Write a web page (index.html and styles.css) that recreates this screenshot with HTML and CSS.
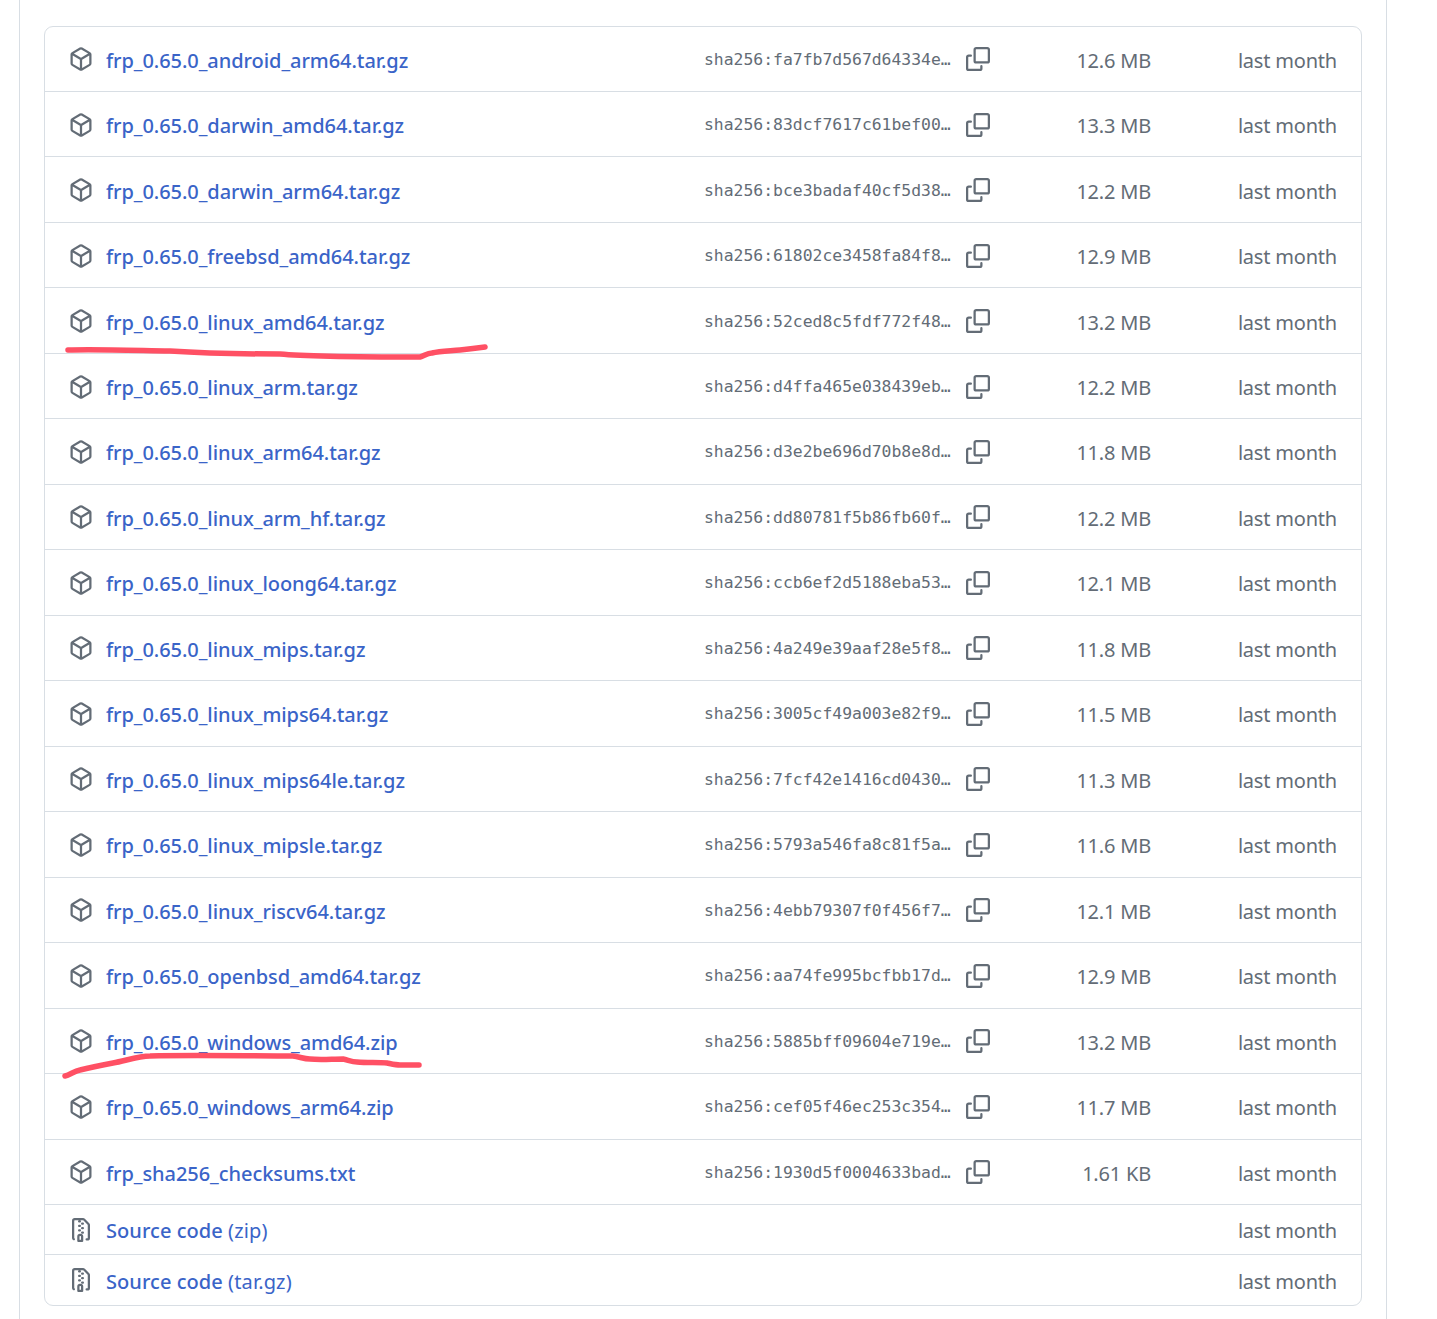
FILE: index.html
```html
<!DOCTYPE html>
<html lang="en">
<head>
  <meta charset="UTF-8" />
  <meta name="viewport" content="width=device-width, initial-scale=1.0"/>
  <title>frp assets</title>
  <link rel="stylesheet" href="styles.css">
</head>
<body>

  <svg class="defs" width="0" height="0">
    <symbol id="pkg" viewBox="0 0 16 16"><path d="m8.878.392 5.25 3.045c.54.314.872.89.872 1.514v6.098a1.75 1.75 0 0 1-.872 1.514l-5.25 3.045a1.75 1.75 0 0 1-1.756 0l-5.25-3.045A1.75 1.75 0 0 1 1 11.049V4.951c0-.624.332-1.201.872-1.514L7.122.392a1.75 1.75 0 0 1 1.756 0ZM7.875 1.69l-4.63 2.685L8 7.133l4.755-2.758-4.63-2.685a.248.248 0 0 0-.25 0ZM2.5 5.677v5.372c0 .09.047.171.125.216l4.625 2.683V8.432Zm6.25 8.271 4.625-2.683a.25.25 0 0 0 .125-.216V5.677L8.75 8.432Z"/></symbol>
    <symbol id="copy" viewBox="0 0 16 16"><path d="M0 6.75C0 5.784.784 5 1.75 5h1.5a.75.75 0 0 1 0 1.5h-1.5a.25.25 0 0 0-.25.25v7.5c0 .138.112.25.25.25h7.5a.25.25 0 0 0 .25-.25v-1.5a.75.75 0 0 1 1.5 0v1.5A1.75 1.75 0 0 1 9.25 16h-7.5A1.75 1.75 0 0 1 0 14.25Z"/><path d="M5 1.75C5 .784 5.784 0 6.75 0h7.5C15.216 0 16 .784 16 1.75v7.5A1.75 1.75 0 0 1 14.25 11h-7.5A1.75 1.75 0 0 1 5 9.25Zm1.75-.25a.25.25 0 0 0-.25.25v7.5c0 .138.112.25.25.25h7.5a.25.25 0 0 0 .25-.25v-7.5a.25.25 0 0 0-.25-.25Z"/></symbol>
    <symbol id="zip" viewBox="0 0 16 16"><path d="M3.5 1.75v11.5c0 .09.048.173.126.217a.75.75 0 0 1-.752 1.298A1.748 1.748 0 0 1 2 13.25V1.75C2 .784 2.784 0 3.75 0h5.586c.464 0 .909.185 1.237.513l2.914 2.914c.329.328.513.773.513 1.237v8.586A1.75 1.75 0 0 1 12.25 15h-.5a.75.75 0 0 1 0-1.5h.5a.25.25 0 0 0 .25-.25V4.664a.25.25 0 0 0-.073-.177L9.513 1.573a.25.25 0 0 0-.177-.073H7.25a.75.75 0 0 1 0 1.5h-.5a.75.75 0 0 1 0-1.5h-3a.25.25 0 0 0-.25.25Zm3.75 8.75h.5c.966 0 1.75.784 1.75 1.75v3a.75.75 0 0 1-.75.75h-2.5a.75.75 0 0 1-.75-.75v-3c0-.966.784-1.75 1.75-1.75ZM6 5.25a.75.75 0 0 1 .75-.75h.5a.75.75 0 0 1 0 1.5h-.5A.75.75 0 0 1 6 5.25Zm.75 2.25h.5a.75.75 0 0 1 0 1.5h-.5a.75.75 0 0 1 0-1.5ZM8 6.75A.75.75 0 0 1 8.75 6h.5a.75.75 0 0 1 0 1.5h-.5A.75.75 0 0 1 8 6.75ZM8.75 3h.5a.75.75 0 0 1 0 1.5h-.5a.75.75 0 0 1 0-1.5ZM8 9.75A.75.75 0 0 1 8.75 9h.5a.75.75 0 0 1 0 1.5h-.5A.75.75 0 0 1 8 9.75Zm-1 2.5v2.25h1v-2.25a.25.25 0 0 0-.25-.25h-.5a.25.25 0 0 0-.25.25Z"/></symbol>
  </svg>

  <div class="page">
    <ul class="assets">
      <li class="asset"><svg class="icon"><use href="#pkg"/></svg><a class="name">frp_0.65.0_android_arm64.tar.gz</a><code class="hash">sha256:fa7fb7d567d64334e…</code><svg class="icon"><use href="#copy"/></svg><span class="size">12.6 MB</span><span class="date">last month</span></li>
      <li class="asset"><svg class="icon"><use href="#pkg"/></svg><a class="name">frp_0.65.0_darwin_amd64.tar.gz</a><code class="hash">sha256:83dcf7617c61bef00…</code><svg class="icon"><use href="#copy"/></svg><span class="size">13.3 MB</span><span class="date">last month</span></li>
      <li class="asset"><svg class="icon"><use href="#pkg"/></svg><a class="name">frp_0.65.0_darwin_arm64.tar.gz</a><code class="hash">sha256:bce3badaf40cf5d38…</code><svg class="icon"><use href="#copy"/></svg><span class="size">12.2 MB</span><span class="date">last month</span></li>
      <li class="asset"><svg class="icon"><use href="#pkg"/></svg><a class="name">frp_0.65.0_freebsd_amd64.tar.gz</a><code class="hash">sha256:61802ce3458fa84f8…</code><svg class="icon"><use href="#copy"/></svg><span class="size">12.9 MB</span><span class="date">last month</span></li>
      <li class="asset"><svg class="icon"><use href="#pkg"/></svg><a class="name">frp_0.65.0_linux_amd64.tar.gz</a><code class="hash">sha256:52ced8c5fdf772f48…</code><svg class="icon"><use href="#copy"/></svg><span class="size">13.2 MB</span><span class="date">last month</span></li>
      <li class="asset"><svg class="icon"><use href="#pkg"/></svg><a class="name">frp_0.65.0_linux_arm.tar.gz</a><code class="hash">sha256:d4ffa465e038439eb…</code><svg class="icon"><use href="#copy"/></svg><span class="size">12.2 MB</span><span class="date">last month</span></li>
      <li class="asset"><svg class="icon"><use href="#pkg"/></svg><a class="name">frp_0.65.0_linux_arm64.tar.gz</a><code class="hash">sha256:d3e2be696d70b8e8d…</code><svg class="icon"><use href="#copy"/></svg><span class="size">11.8 MB</span><span class="date">last month</span></li>
      <li class="asset"><svg class="icon"><use href="#pkg"/></svg><a class="name">frp_0.65.0_linux_arm_hf.tar.gz</a><code class="hash">sha256:dd80781f5b86fb60f…</code><svg class="icon"><use href="#copy"/></svg><span class="size">12.2 MB</span><span class="date">last month</span></li>
      <li class="asset"><svg class="icon"><use href="#pkg"/></svg><a class="name">frp_0.65.0_linux_loong64.tar.gz</a><code class="hash">sha256:ccb6ef2d5188eba53…</code><svg class="icon"><use href="#copy"/></svg><span class="size">12.1 MB</span><span class="date">last month</span></li>
      <li class="asset"><svg class="icon"><use href="#pkg"/></svg><a class="name">frp_0.65.0_linux_mips.tar.gz</a><code class="hash">sha256:4a249e39aaf28e5f8…</code><svg class="icon"><use href="#copy"/></svg><span class="size">11.8 MB</span><span class="date">last month</span></li>
      <li class="asset"><svg class="icon"><use href="#pkg"/></svg><a class="name">frp_0.65.0_linux_mips64.tar.gz</a><code class="hash">sha256:3005cf49a003e82f9…</code><svg class="icon"><use href="#copy"/></svg><span class="size">11.5 MB</span><span class="date">last month</span></li>
      <li class="asset"><svg class="icon"><use href="#pkg"/></svg><a class="name">frp_0.65.0_linux_mips64le.tar.gz</a><code class="hash">sha256:7fcf42e1416cd0430…</code><svg class="icon"><use href="#copy"/></svg><span class="size">11.3 MB</span><span class="date">last month</span></li>
      <li class="asset"><svg class="icon"><use href="#pkg"/></svg><a class="name">frp_0.65.0_linux_mipsle.tar.gz</a><code class="hash">sha256:5793a546fa8c81f5a…</code><svg class="icon"><use href="#copy"/></svg><span class="size">11.6 MB</span><span class="date">last month</span></li>
      <li class="asset"><svg class="icon"><use href="#pkg"/></svg><a class="name">frp_0.65.0_linux_riscv64.tar.gz</a><code class="hash">sha256:4ebb79307f0f456f7…</code><svg class="icon"><use href="#copy"/></svg><span class="size">12.1 MB</span><span class="date">last month</span></li>
      <li class="asset"><svg class="icon"><use href="#pkg"/></svg><a class="name">frp_0.65.0_openbsd_amd64.tar.gz</a><code class="hash">sha256:aa74fe995bcfbb17d…</code><svg class="icon"><use href="#copy"/></svg><span class="size">12.9 MB</span><span class="date">last month</span></li>
      <li class="asset"><svg class="icon"><use href="#pkg"/></svg><a class="name">frp_0.65.0_windows_amd64.zip</a><code class="hash">sha256:5885bff09604e719e…</code><svg class="icon"><use href="#copy"/></svg><span class="size">13.2 MB</span><span class="date">last month</span></li>
      <li class="asset"><svg class="icon"><use href="#pkg"/></svg><a class="name">frp_0.65.0_windows_arm64.zip</a><code class="hash">sha256:cef05f46ec253c354…</code><svg class="icon"><use href="#copy"/></svg><span class="size">11.7 MB</span><span class="date">last month</span></li>
      <li class="asset"><svg class="icon"><use href="#pkg"/></svg><a class="name">frp_sha256_checksums.txt</a><code class="hash">sha256:1930d5f0004633bad…</code><svg class="icon"><use href="#copy"/></svg><span class="size">1.61 KB</span><span class="date">last month</span></li>
      <li class="asset source"><svg class="icon"><use href="#zip"/></svg><a class="name">Source code <span class="ext">(zip)</span></a><span class="date">last month</span></li>
      <li class="asset source"><svg class="icon"><use href="#zip"/></svg><a class="name">Source code <span class="ext">(tar.gz)</span></a><span class="date">last month</span></li>
    </ul>

    <!-- red marker strokes drawn over the list -->
    <svg class="marks" viewBox="0 0 1437 1319">
      <path d="M68 350 C90 349 120 350 170 351 C200 353 240 354 280 354 C300 356 340 357 420 357 C424 356 427 353 432 353 C440 351 450 351 460 350 C470 349 478 348 485 347"/>
      <path d="M65 1076 C70 1075 74 1071 80 1070 C92 1067 102 1065 113 1063 C125 1061 138 1056 150 1056 C190 1055 250 1056 293 1056 C300 1057 304 1059 310 1059 C320 1060 332 1059 343 1059 C348 1060 352 1062 357 1062 C368 1063 378 1062 387 1063 C392 1064 396 1065 400 1065 L419 1065"/>
    </svg>
  </div>

</body>
</html>
```

FILE: styles.css
```css
* { margin: 0; padding: 0; box-sizing: border-box; }
html, body {
  height: 100%;
  overflow: hidden;
}
body {
  font-family: "Noto Sans", sans-serif;
  font-size: 20px;
  background: #fff;
  color: #636c76;
}
.defs {
  position: absolute;
}
.page {
  width: 1368px;
  height: 100%;
  margin-left: 19px;
  padding: 26px 24px 0;
  border-left: 1px solid #d8dee4;
  border-right: 1px solid #d8dee4;
}
.assets {
  list-style: none;
  border: 1px solid #d8dee4;
  border-radius: 9px;
}
.asset {
  display: grid;
  grid-template-columns: 37px 598px 262px 24px 161px 186px;
  align-items: center;
  height: 65.47px;
  padding: 0.8px 24px 0;
  border-bottom: 1px solid #d8dee4;
}
.asset:first-child {
  height: 65px;
}
.asset:last-child {
  border-bottom: 0;
}
.asset.source {
  height: 50px;
}
.icon {
  width: 24px;
  height: 24px;
  fill: #636c76;
}
.name {
  padding-top: 2px;
  color: #3a64c8;
  font-weight: 500;
  letter-spacing: -0.06px;
}
.source .name {
  letter-spacing: 0.05px;
}
.ext {
  font-weight: 400;
  letter-spacing: 0.15px;
}
.hash {
  width: 248px;
  font-family: "DejaVu Sans Mono", "Liberation Mono", monospace;
  font-size: 16.4px;
  white-space: nowrap;
  overflow: hidden;
  text-overflow: ellipsis;
}
.size, .date {
  padding-top: 2px;
  letter-spacing: -0.2px;
  text-align: right;
}
.source .date {
  grid-column: 6;
}
.marks {
  position: absolute;
  top: 0;
  left: 0;
  width: 1437px;
  height: 1319px;
  fill: none;
  stroke: #ff5064;
  stroke-width: 5.5;
  stroke-linecap: round;
  stroke-linejoin: round;
  pointer-events: none;
}
```
